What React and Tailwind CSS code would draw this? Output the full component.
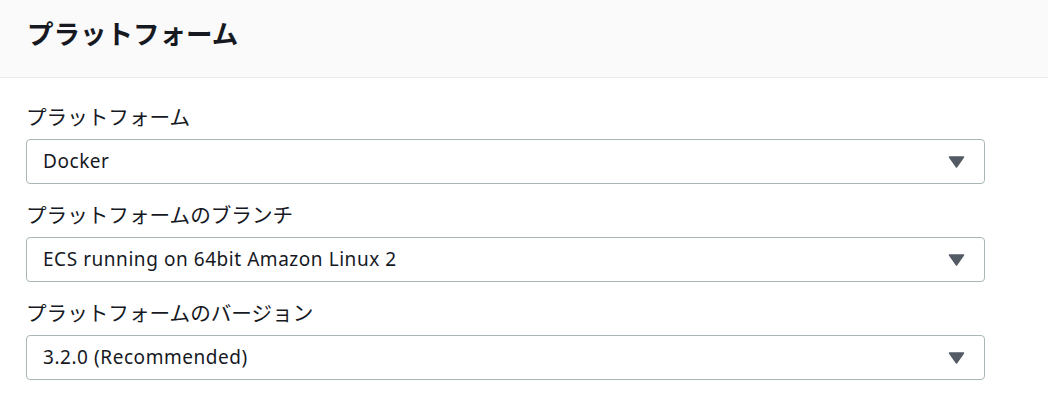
import React from 'react';

const font = { fontFamily: '"Noto Sans", "Noto Sans CJK JP", sans-serif' };

const Field = ({ label, value }) => (
  <div className="flex flex-col">
    <div className="text-[20.6px] leading-[28px] text-[#16191f] mb-[8px]">{label}</div>
    <div className="h-[45px] border border-[#aab7b8] rounded-[4px] bg-white flex items-center justify-between pl-[16px] pr-[19px]">
      <span className="text-[19px] tracking-[0.55px] text-[#16191f]">{value}</span>
      <svg width="17" height="12" viewBox="0 0 17 12">
        <path d="M1.5 1 L15.5 1 L8.5 11 Z" fill="#545b64" stroke="#545b64" strokeWidth="1.5" strokeLinejoin="round" />
      </svg>
    </div>
  </div>
);

export default function App() {
  return (
    <div className="w-[1048px] h-[408px] bg-white" style={font}>
      <div className="h-[78px] bg-[#fafafa] border-b border-[#eaeded] px-[27px] pt-[18px]">
        <h2 className="text-[26.5px] leading-[32px] font-bold text-[#16191f]">プラットフォーム</h2>
      </div>
      <div className="pl-[26px] pr-[63px] pt-[25px] flex flex-col gap-[17px]">
        <Field label="プラットフォーム" value="Docker" />
        <Field label="プラットフォームのブランチ" value="ECS running on 64bit Amazon Linux 2" />
        <Field label="プラットフォームのバージョン" value="3.2.0 (Recommended)" />
      </div>
    </div>
  );
}
